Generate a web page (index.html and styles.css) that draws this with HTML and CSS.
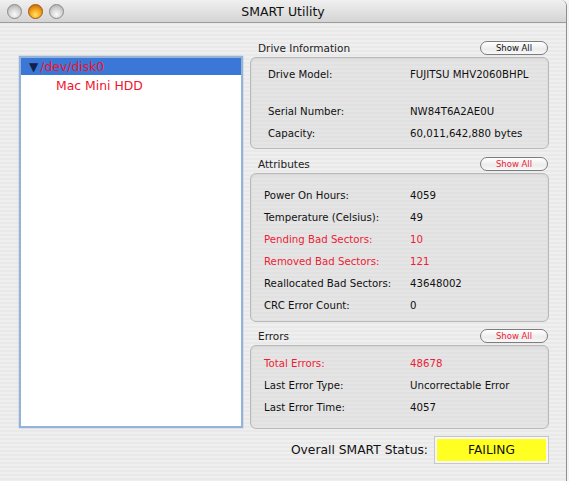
FILE: index.html
```html
<!DOCTYPE html>
<html lang="en">
<head>
    <meta charset="UTF-8">
    <title>SMART Utility</title>
    <link rel="stylesheet" href="styles.css">
</head>
<body>
    <div class="window">
        <div class="titlebar">
            <div class="lights">
                <span class="light"></span>
                <span class="light minimize"></span>
                <span class="light"></span>
            </div>
            <div class="title">SMART Utility</div>
        </div>
        <div class="content">
            <div class="disk-list">
                <div class="disk-row selected"><span class="arrow">&#9660;</span>/dev/disk0</div>
                <div class="disk-row child">Mac Mini HDD</div>
            </div>
            <div class="details">
                <div class="group">
                    <div class="group-header">
                        <span class="group-label">Drive Information</span>
                        <button class="show-all">Show All</button>
                    </div>
                    <div class="group-box drive-box">
                        <div class="row spaced"><span class="key">Drive Model:</span><span>FUJITSU MHV2060BHPL</span></div>
                        <div class="row"><span class="key">Serial Number:</span><span>NW84T6A2AE0U</span></div>
                        <div class="row"><span class="key">Capacity:</span><span>60,011,642,880 bytes</span></div>
                    </div>
                </div>
                <div class="group attributes">
                    <div class="group-header">
                        <span class="group-label">Attributes</span>
                        <button class="show-all warn">Show All</button>
                    </div>
                    <div class="group-box attr-box">
                        <div class="row"><span class="key">Power On Hours:</span><span>4059</span></div>
                        <div class="row"><span class="key">Temperature (Celsius):</span><span>49</span></div>
                        <div class="row bad"><span class="key">Pending Bad Sectors:</span><span>10</span></div>
                        <div class="row bad"><span class="key">Removed Bad Sectors:</span><span>121</span></div>
                        <div class="row"><span class="key">Reallocated Bad Sectors:</span><span>43648002</span></div>
                        <div class="row"><span class="key">CRC Error Count:</span><span>0</span></div>
                    </div>
                </div>
                <div class="group errors">
                    <div class="group-header">
                        <span class="group-label">Errors</span>
                        <button class="show-all warn">Show All</button>
                    </div>
                    <div class="group-box error-box">
                        <div class="row bad"><span class="key">Total Errors:</span><span>48678</span></div>
                        <div class="row"><span class="key">Last Error Type:</span><span>Uncorrectable Error</span></div>
                        <div class="row"><span class="key">Last Error Time:</span><span>4057</span></div>
                    </div>
                </div>
                <div class="status">
                    <span class="status-label">Overall SMART Status:</span>
                    <div class="status-box">FAILING</div>
                </div>
            </div>
        </div>
    </div>
</body>
</html>
```

FILE: styles.css
```css
body {
    margin: 0;
    background: #f4f4f4;
    font-family: "DejaVu Sans", sans-serif;
}
.window {
    width: 566px;
    height: 481px;
    border-right: 1px solid #8e8e8e;
    border-radius: 0 6px 0 0;
    overflow: hidden;
    background: repeating-linear-gradient(#efefef 0 2px, #e9e9e9 2px 4px);
}
.titlebar {
    height: 22px;
    border-bottom: 1px solid #9c9c9c;
    background: linear-gradient(#f0f0f0, #d4d4d4);
    position: relative;
    display: flex;
    align-items: center;
    justify-content: center;
}
.lights {
    position: absolute;
    left: 7px;
    top: 4px;
    display: flex;
    gap: 6px;
}
.light {
    width: 15px;
    height: 15px;
    border-radius: 50%;
    border: 1px solid #8a8a8a;
    box-sizing: border-box;
    background: radial-gradient(circle at 50% 72%, #fafafa 0, #d8d8d8 45%, #a4a4a4 100%);
}
.light.minimize {
    border-color: #a0560c;
    background: radial-gradient(circle at 50% 75%, #ffe46a 0, #f7a51c 45%, #b55a06 100%);
}
.title {
    font-size: 12.5px;
    color: #111;
    margin-top: 1px;
}
.content {
    display: flex;
    padding: 17px 0 0 19px;
}
.disk-list {
    width: 220px;
    height: 368px;
    margin-top: 16px;
    background: #fff;
    border: 2px solid #93b4d8;
    box-shadow: 0 0 1px #6f95c2;
}
.disk-row {
    height: 17px;
    line-height: 17px;
    font-size: 12.4px;
    color: #f0142c;
}
.disk-row.selected {
    background: #3a77d6;
    padding-left: 8px;
}
.arrow {
    color: #12204a;
    font-size: 12px;
    margin-right: 2px;
}
.disk-row.child {
    padding-left: 35px;
    margin-top: 2px;
}
.details {
    width: 299px;
    margin-left: 7px;
}
.group-header {
    height: 16px;
    display: flex;
    align-items: center;
    justify-content: space-between;
    padding-left: 8px;
}
.group-label {
    font-size: 10.5px;
    color: #222;
}
.show-all {
    width: 68px;
    height: 14px;
    padding: 0;
    margin-right: 1px;
    border: 1px solid #7c7c7c;
    border-radius: 7px;
    background: linear-gradient(#ffffff, #ececec 60%, #f8f8f8);
    font-family: "DejaVu Sans", sans-serif;
    font-size: 8.5px;
    line-height: 12px;
    color: #111;
}
.show-all.warn {
    color: #ee1c35;
}
.group-box {
    margin-top: 1px;
    border: 1px solid #b9b9b9;
    border-radius: 6px;
    background: repeating-linear-gradient(#e5e5e5 0 2px, #e1e1e1 2px 4px);
    box-shadow: inset 0 1px 2px rgba(0, 0, 0, 0.08);
    font-size: 10.2px;
    color: #111;
}
.drive-box {
    padding: 6px 0 3px 17px;
}
.attr-box {
    padding: 11px 0 4px 13px;
}
.error-box {
    padding: 7px 0 9px 13px;
}
.row {
    display: flex;
    height: 22px;
    line-height: 22px;
}
.row.spaced {
    margin-bottom: 15px;
}
.drive-box .key {
    width: 142px;
}
.key {
    width: 146px;
}
.row.bad {
    color: #ee1c35;
}
.attributes {
    margin-top: 7px;
}
.errors {
    margin-top: 6px;
}
.status {
    display: flex;
    justify-content: flex-end;
    align-items: center;
    gap: 7px;
    margin-top: 8px;
    margin-right: 1px;
}
.status-label {
    font-size: 12.3px;
    color: #111;
}
.status-box {
    width: 109px;
    height: 22px;
    line-height: 22px;
    text-align: center;
    font-size: 12.2px;
    color: #111;
    background: #ffff22;
    border: 2px solid #f6f6f6;
    outline: 1px solid #c6c6c6;
}
```
